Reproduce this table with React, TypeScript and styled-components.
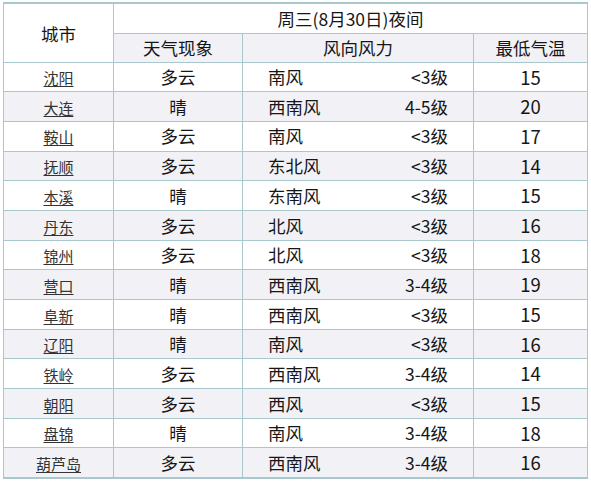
import React from 'react'
import styled, { createGlobalStyle } from 'styled-components'

const GlobalStyle = createGlobalStyle`
    html, body {
        margin: 0;
        padding: 0;
        background: #ffffff;
    }
    body {
        font-family: "Noto Sans CJK SC", "Noto Sans", sans-serif;
        color: #1a1a1a;
    }
`

const Wrapper = styled.div`
    width: 591px;
    height: 484px;
    padding: 2px 0 0 3px;
    box-sizing: border-box;
    overflow: hidden;
`

const Table = styled.table`
    width: 584px;
    border-collapse: collapse;
    table-layout: fixed;
    border-top: 2px solid #a9c8cd;
    border-bottom: 2px solid #a9c8cd;
    font-size: 17.5px;
    line-height: 1;
`

const Row = styled.tr<{ $shade?: boolean; $h: number }>`
    height: ${(p) => p.$h}px;
    background: ${(p) => (p.$shade ? '#f2f2f6' : '#ffffff')};
`

const Cell = styled.td<{ $align?: 'left' | 'center' }>`
    border: 1px solid #a9c8cd;
    padding: 0;
    text-align: ${(p) => p.$align || 'center'};
    vertical-align: middle;
    color: #161616;
    white-space: nowrap;
`

const HeadCell = styled(Cell)`
    font-size: 17.5px;
    padding-top: 1px;
`

const Num = styled.span`
    font-size: 18.5px;
`

const CityLink = styled.a`
    font-size: 15px;
    color: #333333;
    text-decoration: underline;
    text-underline-offset: 2px;
`

const WindBox = styled.div`
    display: flex;
    justify-content: space-between;
    align-items: center;
    padding: 0 25px 0 25px;
`

const data = [
    { city: '沈阳', weather: '多云', dir: '南风', level: '<3级', temp: 15 },
    { city: '大连', weather: '晴', dir: '西南风', level: '4-5级', temp: 20 },
    { city: '鞍山', weather: '多云', dir: '南风', level: '<3级', temp: 17 },
    { city: '抚顺', weather: '多云', dir: '东北风', level: '<3级', temp: 14 },
    { city: '本溪', weather: '晴', dir: '东南风', level: '<3级', temp: 15 },
    { city: '丹东', weather: '多云', dir: '北风', level: '<3级', temp: 16 },
    { city: '锦州', weather: '多云', dir: '北风', level: '<3级', temp: 18 },
    { city: '营口', weather: '晴', dir: '西南风', level: '3-4级', temp: 19 },
    { city: '阜新', weather: '晴', dir: '西南风', level: '<3级', temp: 15 },
    { city: '辽阳', weather: '晴', dir: '南风', level: '<3级', temp: 16 },
    { city: '铁岭', weather: '多云', dir: '西南风', level: '3-4级', temp: 14 },
    { city: '朝阳', weather: '多云', dir: '西风', level: '<3级', temp: 15 },
    { city: '盘锦', weather: '晴', dir: '南风', level: '3-4级', temp: 18 },
    { city: '葫芦岛', weather: '多云', dir: '西南风', level: '3-4级', temp: 16 },
]

const App = () => {
    return (
        <Wrapper>
            <GlobalStyle />
            <Table>
                <colgroup>
                    <col style={{ width: 110 }} />
                    <col style={{ width: 129 }} />
                    <col style={{ width: 231 }} />
                    <col style={{ width: 114 }} />
                </colgroup>
                <thead>
                    <Row $h={30}>
                        <HeadCell rowSpan={2}>城市</HeadCell>
                        <HeadCell colSpan={3}>周三(8月30日)夜间</HeadCell>
                    </Row>
                    <Row $h={29} $shade>
                        <HeadCell>天气现象</HeadCell>
                        <HeadCell>风向风力</HeadCell>
                        <HeadCell>最低气温</HeadCell>
                    </Row>
                </thead>
                <tbody>
                    {data.map((item, i) => (
                        <Row key={item.city} $h={29.7} $shade={i % 2 === 1}>
                            <Cell>
                                <CityLink>{item.city}</CityLink>
                            </Cell>
                            <Cell>{item.weather}</Cell>
                            <Cell $align='left'>
                                <WindBox>
                                    <span>{item.dir}</span>
                                    <span>{item.level}</span>
                                </WindBox>
                            </Cell>
                            <Cell>
                                <Num>{item.temp}</Num>
                            </Cell>
                        </Row>
                    ))}
                </tbody>
            </Table>
        </Wrapper>
    )
}

export default App
